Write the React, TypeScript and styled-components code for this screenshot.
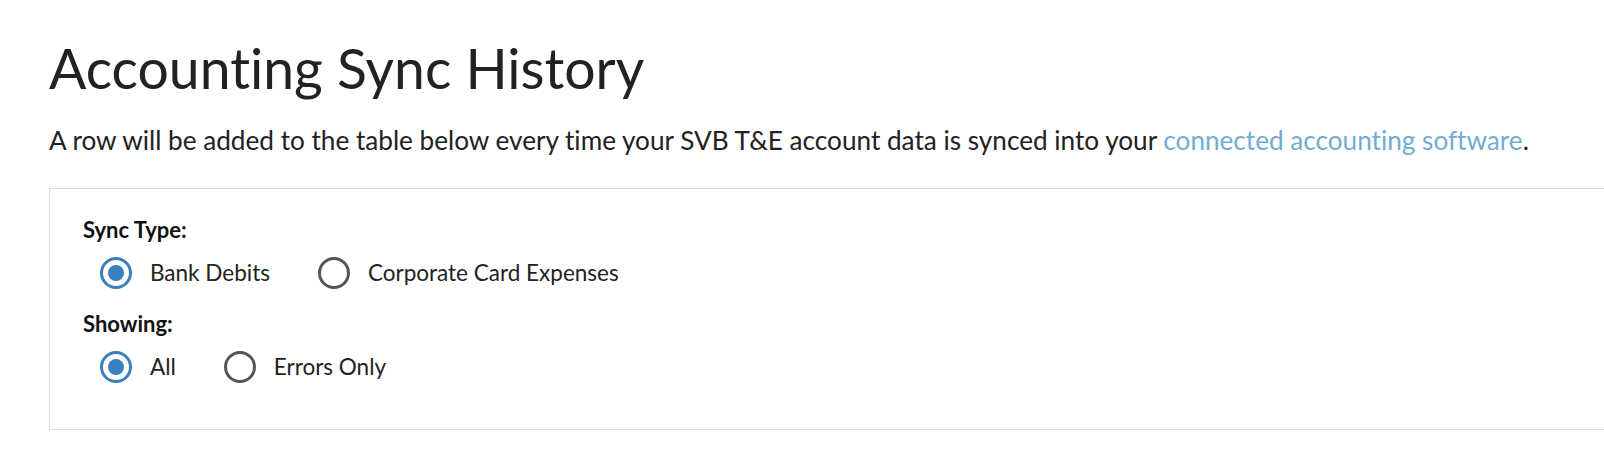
import React, { useState } from "react";
import styled, { createGlobalStyle } from "styled-components";

const GlobalStyle = createGlobalStyle`
  html, body {
    margin: 0;
    padding: 0;
    background: #ffffff;
    overflow: hidden;
  }
  body {
    font-family: Lato, "Open Sans", sans-serif;
    font-variant-ligatures: none;
    color: #222222;
  }
`;

const Page = styled.main`
  padding: 36px 0 0 49px;
`;

const Title = styled.h1`
  margin: 0;
  font-size: 55.3px;
  font-weight: 400;
  line-height: 64px;
  color: #222222;
`;

const Intro = styled.p`
  margin: 22px 0 0 0;
  font-size: 26.15px;
  line-height: 36px;
  color: #222222;
`;

const Link = styled.a`
  color: #72acd3;
  text-decoration: none;
`;

const FilterBox = styled.section`
  margin: 30px -4px 0 0;
  border: 1px solid #dedede;
  padding: 27px 0 46px 33px;
  display: flex;
  flex-direction: column;
`;

const GroupLabel = styled.div<{ $gapTop?: number }>`
  margin-top: ${(p) => p.$gapTop ?? 0}px;
  font-size: 22px;
  font-weight: 700;
  line-height: 28px;
  color: #111111;
`;

const OptionRow = styled.div`
  display: flex;
  align-items: center;
  gap: 48px;
  padding-left: 17px;
  margin-top: 13px;
`;

const Option = styled.label`
  display: flex;
  align-items: center;
  gap: 18px;
  font-size: 22.5px;
  line-height: 32px;
  color: #222222;
  cursor: pointer;
`;

const Circle = styled.span<{ $checked: boolean }>`
  box-sizing: border-box;
  width: 32px;
  height: 32px;
  border-radius: 50%;
  border: 3px solid ${(p) => (p.$checked ? "#3a7fbf" : "#555555")};
  display: flex;
  align-items: center;
  justify-content: center;
  &::after {
    content: "";
    display: ${(p) => (p.$checked ? "block" : "none")};
    width: 16px;
    height: 16px;
    border-radius: 50%;
    background: #3a7fbf;
  }
`;

type RadioProps = { label: string; checked: boolean; onSelect: () => void };

function Radio({ label, checked, onSelect }: RadioProps) {
  return (
    <Option onClick={onSelect}>
      <Circle $checked={checked} />
      {label}
    </Option>
  );
}

export default function App() {
  const [syncType, setSyncType] = useState("bank");
  const [showing, setShowing] = useState("all");
  return (
    <>
      <GlobalStyle />
      <Page>
        <Title>Accounting Sync History</Title>
        <Intro>
          A row will be added to the table below every time your SVB T&amp;E account data is synced into your{" "}
          <Link href="#">connected accounting software</Link>.
        </Intro>
        <FilterBox>
          <GroupLabel>Sync Type:</GroupLabel>
          <OptionRow>
            <Radio label="Bank Debits" checked={syncType === "bank"} onSelect={() => setSyncType("bank")} />
            <Radio
              label="Corporate Card Expenses"
              checked={syncType === "card"}
              onSelect={() => setSyncType("card")}
            />
          </OptionRow>
          <GroupLabel $gapTop={21}>Showing:</GroupLabel>
          <OptionRow>
            <Radio label="All" checked={showing === "all"} onSelect={() => setShowing("all")} />
            <Radio label="Errors Only" checked={showing === "errors"} onSelect={() => setShowing("errors")} />
          </OptionRow>
        </FilterBox>
      </Page>
    </>
  );
}
